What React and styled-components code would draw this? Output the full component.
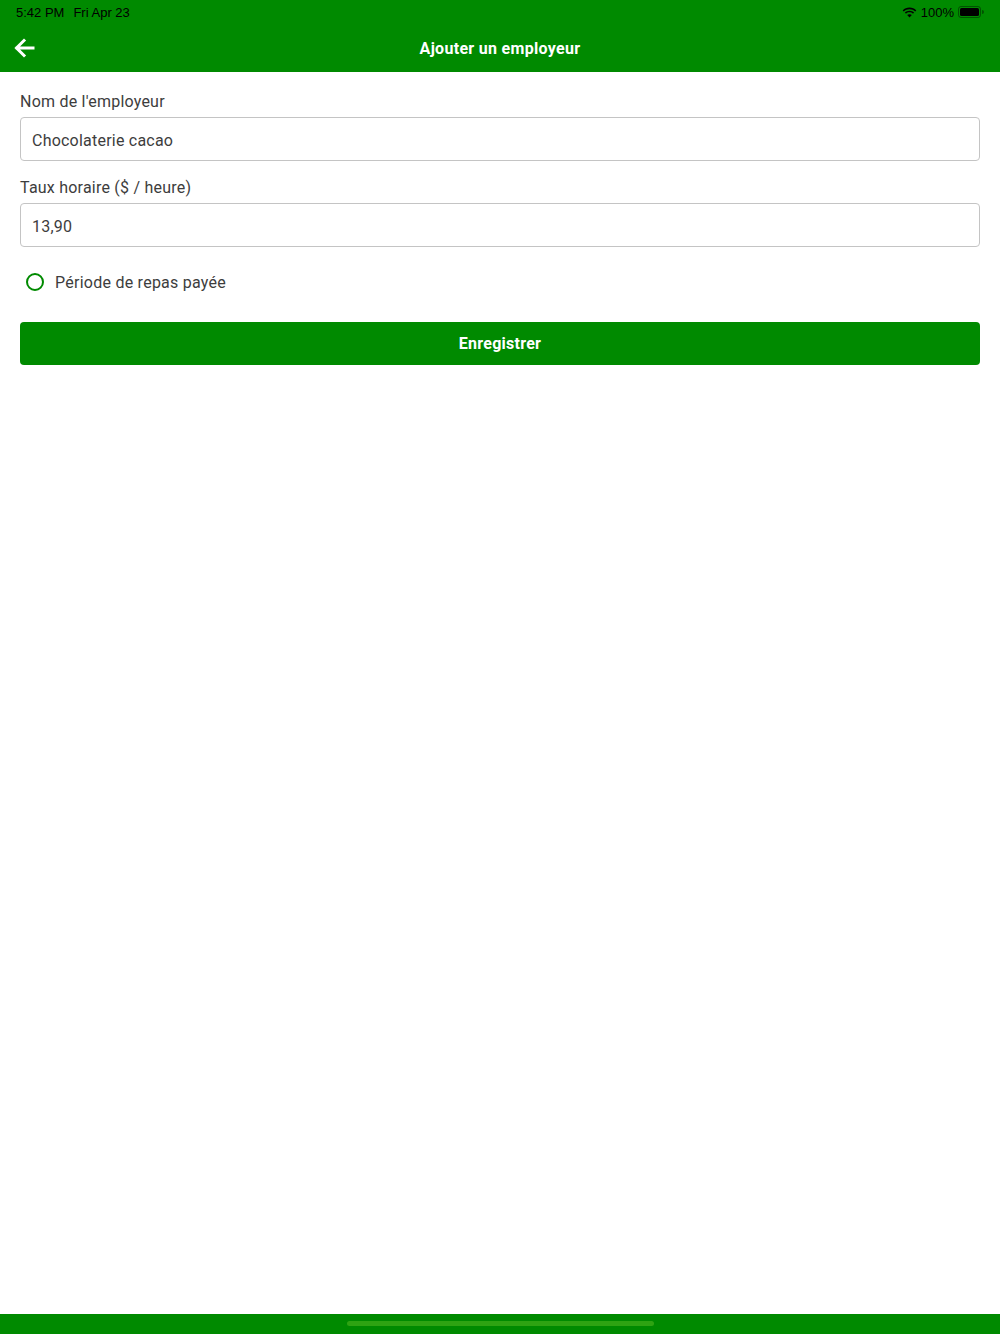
import React from 'react';
import styled, {createGlobalStyle} from 'styled-components';

const green = '#008a00';
const textColor = '#3d3d3d';

const GlobalStyle = createGlobalStyle`
  html, body {
    margin: 0;
    padding: 0;
    background: #fff;
  }
  body {
    font-family: Roboto, "Liberation Sans", sans-serif;
  }
`;

const Screen = styled.div`
  display: flex;
  flex-direction: column;
  width: 1000px;
  height: 1334px;
  background: #fff;
`;

const TopBar = styled.header`
  background: ${green};
  height: 72px;
  display: flex;
  flex-direction: column;
`;

const StatusBar = styled.div`
  height: 24px;
  display: flex;
  align-items: center;
  justify-content: space-between;
  padding: 0 16px 0 16px;
  font-family: "Liberation Sans", Arial, sans-serif;
  font-size: 13px;
  color: #000;
`;

const StatusLeft = styled.div`
  display: flex;
  gap: 9px;
`;

const StatusRight = styled.div`
  display: flex;
  align-items: center;
  gap: 4px;
`;

const NavBar = styled.div`
  position: relative;
  flex: 1;
  display: flex;
  align-items: center;
  justify-content: center;
`;

const BackButton = styled.button`
  position: absolute;
  left: 12px;
  top: 12px;
  background: none;
  border: 0;
  padding: 0;
  width: 24px;
  height: 24px;
  display: flex;
  align-items: center;
  justify-content: center;
`;

const Title = styled.h1`
  margin: 0;
  font-size: 16px;
  letter-spacing: 0.3px;
  font-weight: 700;
  color: #fff;
`;

const Form = styled.main`
  flex: 1;
  display: flex;
  flex-direction: column;
  padding: 20px 20px 0;
`;

const Label = styled.label`
  font-size: 16px;
  letter-spacing: 0.22px;
  color: ${textColor};
  line-height: 20px;
  margin-bottom: 5px;
`;

const Input = styled.input`
  box-sizing: border-box;
  height: 44px;
  width: 100%;
  border: 1px solid #c4c4c4;
  border-radius: 4px;
  padding: 2px 11px 0;
  font-family: Roboto, "Liberation Sans", sans-serif;
  font-size: 16px;
  letter-spacing: 0.22px;
  color: ${textColor};
  margin-bottom: 17px;
  outline: none;
`;

const RadioRow = styled.div`
  display: flex;
  align-items: center;
  gap: 11px;
  height: 32px;
  padding-left: 6px;
  margin-top: 2px;
`;

const RadioCircle = styled.span`
  box-sizing: border-box;
  width: 18px;
  height: 18px;
  border-radius: 50%;
  border: 2px solid ${green};
`;

const RadioText = styled.span`
  font-size: 16px;
  letter-spacing: 0.25px;
  color: ${textColor};
`;

const SaveButton = styled.button`
  margin-top: 24px;
  height: 43px;
  width: 100%;
  background: ${green};
  border: 0;
  border-radius: 4px;
  color: #fff;
  font-family: Roboto, "Liberation Sans", sans-serif;
  font-size: 16px;
  letter-spacing: 0.25px;
  font-weight: 700;
`;

const BottomBar = styled.footer`
  height: 20px;
  background: ${green};
  display: flex;
  justify-content: center;
  padding-top: 7px;
  box-sizing: border-box;
`;

const HomeIndicator = styled.div`
  width: 307px;
  height: 5px;
  border-radius: 3px;
  background: #2ea312;
`;

const Battery = () => (
  <svg width="26" height="12" viewBox="0 0 26 12">
    <rect x="0.5" y="0.5" width="22" height="11" rx="2.5" fill="none" stroke="#000" strokeOpacity="0.4" />
    <rect x="2" y="2" width="19" height="8" rx="1.5" fill="#000" />
    <path d="M24 4 v4 a1.5 1.5 0 0 0 0 -4z" fill="#000" fillOpacity="0.4" />
  </svg>
);

const Wifi = () => (
  <svg width="15" height="11" viewBox="0 0 15 11">
    <path d="M7.5 2.2c2.2 0 4.2.9 5.7 2.3l1.1-1.1C12.5 1.6 10.1.6 7.5.6S2.5 1.6.7 3.4l1.1 1.1C3.3 3.1 5.3 2.2 7.5 2.2z" fill="#000" />
    <path d="M7.5 5.3c1.3 0 2.6.5 3.5 1.4l1.1-1.1C10.9 4.4 9.3 3.7 7.5 3.7S4.1 4.4 2.9 5.6L4 6.7c.9-.9 2.2-1.4 3.5-1.4z" fill="#000" />
    <path d="M7.5 10.4 9.8 8.1C9.2 7.5 8.4 7.2 7.5 7.2s-1.7.3-2.3.9z" fill="#000" />
  </svg>
);

const BackArrow = () => (
  <svg width="22" height="20" viewBox="0 0 22 20">
    <path d="M20 10H4M11 2.5L3.5 10l7.5 7.5" fill="none" stroke="#fff" strokeWidth="3" strokeLinecap="square" />
  </svg>
);

export default function App() {
  return (
    <Screen>
      <GlobalStyle />
      <TopBar>
        <StatusBar>
          <StatusLeft>
            <span>5:42 PM</span>
            <span>Fri Apr 23</span>
          </StatusLeft>
          <StatusRight>
            <Wifi />
            <span>100%</span>
            <Battery />
          </StatusRight>
        </StatusBar>
        <NavBar>
          <BackButton aria-label="Retour">
            <BackArrow />
          </BackButton>
          <Title>Ajouter un employeur</Title>
        </NavBar>
      </TopBar>
      <Form>
        <Label>Nom de l'employeur</Label>
        <Input defaultValue="Chocolaterie cacao" />
        <Label>Taux horaire ($ / heure)</Label>
        <Input defaultValue="13,90" />
        <RadioRow>
          <RadioCircle />
          <RadioText>Période de repas payée</RadioText>
        </RadioRow>
        <SaveButton>Enregistrer</SaveButton>
      </Form>
      <BottomBar>
        <HomeIndicator />
      </BottomBar>
    </Screen>
  );
}
